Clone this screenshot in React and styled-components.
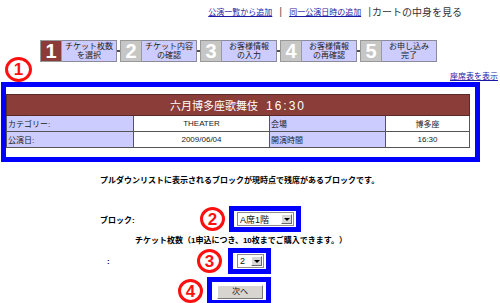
import React from 'react';
import styled, { createGlobalStyle } from 'styled-components';

const GlobalStyle = createGlobalStyle`
    body {
        margin: 0;
        background: #fff;
        font-family: "Liberation Sans", "Noto Sans CJK JP", sans-serif;
        color: #000;
    }
`;

const Page = styled.div`
    width: 500px;
    height: 303px;
    overflow: hidden;
`;

const TopNav = styled.div`
    display: flex;
    justify-content: flex-end;
    align-items: center;
    height: 22px;
    padding-right: 38px;
`;

const NavLink = styled.a`
    font-size: 8px;
    color: #1a1aa6;
    text-decoration: underline;
    cursor: pointer;
`;

const Sep = styled.span`
    font-size: 11px;
    color: #555;
    margin: 0 ${p => p.$right || 7}px 0 7px;
`;

const CartText = styled.span`
    font-size: 10px;
    color: #333;
`;

const Steps = styled.div`
    display: flex;
    margin-top: 18px;
    padding-left: 40px;
`;

const Step = styled.div`
    display: flex;
    align-items: center;
`;

const StepNum = styled.div`
    width: 22px;
    height: 22px;
    box-sizing: border-box;
    border: 1px solid #999;
    background: ${p => (p.$active ? '#8c3c38' : '#c6c6c6')};
    color: #fff;
    font-family: "Liberation Sans", sans-serif;
    font-weight: 700;
    font-size: 20px;
    line-height: 20px;
    text-align: center;
`;

const StepLabel = styled.div`
    width: 55px;
    height: 22px;
    box-sizing: border-box;
    border: 1px solid #8a8a9a;
    border-left: none;
    background: #ccccff;
    color: #222;
    font-size: 8px;
    line-height: 9px;
    text-align: center;
    padding-top: 1px;
`;

const Connector = styled.div`
    width: 3px;
    height: 2px;
    background: #555;
`;

const AnnotRow = styled.div`
    position: relative;
    height: 20px;
    display: flex;
    justify-content: flex-end;
    align-items: flex-end;
    padding-right: 2px;
`;

const Marker = styled.span`
    display: inline-flex;
    align-items: center;
    justify-content: center;
    width: 25px;
    height: 24px;
    box-sizing: border-box;
    border: 3px solid #ff1010;
    border-radius: 50%;
    color: #ff1010;
    font-family: "Liberation Sans", sans-serif;
    font-weight: 700;
    font-size: 17px;
    line-height: 1;
    flex-shrink: 0;
`;

const FloatingMarker = styled(Marker)`
    position: absolute;
    left: 5px;
    top: -5px;
    width: 27px;
    height: 25px;
`;

const SeatLink = styled.a`
    font-size: 8px;
    line-height: 10px;
    color: #1a1aa6;
    text-decoration: underline;
`;

const Frame = styled.div`
    margin-left: 1px;
    width: 479px;
    box-sizing: border-box;
    border: 5px solid #0000ff;
    padding: 7px 6px 9px 0;
`;

const InfoTable = styled.table`
    width: 463px;
    border-collapse: collapse;
    table-layout: fixed;
    font-size: 8px;
`;

const HeadCell = styled.th`
    height: 20px;
    padding: 0;
    background: #8b3d39;
    color: #fff;
    font-weight: 400;
    font-size: 11px;
    text-align: center;
    border: 1px solid #5a2a28;
`;

const Time = styled.span`
    font-family: "Liberation Sans", sans-serif;
    font-size: 12px;
    letter-spacing: 2px;
    margin-left: 8px;
`;

const LabelCell = styled.td`
    height: 15px;
    padding: 0 0 0 1px;
    background: #ccccff;
    border: 1px solid #555;
    color: #222;
`;

const ValueCell = styled.td`
    height: 15px;
    padding: 0;
    background: #fff;
    border: 1px solid #555;
    text-align: center;
    color: #222;
`;

const Notice = styled.p`
    margin: 14px 0 0;
    padding-left: 100px;
    font-size: 8px;
    line-height: 10px;
    font-weight: 700;
`;

const FormRow = styled.div`
    display: flex;
    align-items: center;
    margin-top: ${p => p.$top}px;
    padding-left: ${p => p.$left}px;
`;

const FieldLabel = styled.span`
    width: ${p => p.$w}px;
    font-size: 8px;
    font-weight: 700;
`;

const BlueBox = styled.div`
    display: flex;
    align-items: flex-start;
    margin-left: ${p => p.$gap || 2}px;
    border: 5px solid #0000ff;
    padding: ${p => p.$pad || '1px 2px 0 3px'};
    height: 15px;
    background: #fff;
`;

const Select = styled.div`
    display: flex;
    align-items: center;
    justify-content: space-between;
    width: ${p => p.$w}px;
    height: 14px;
    box-sizing: border-box;
    border: 1px solid #8c8c8c;
    background: #fff;
    padding-left: 2px;
    font-size: 9px;
    color: #111;
`;

const Arrow = styled.span`
    position: relative;
    width: 11px;
    height: 10px;
    margin-right: 1px;
    box-sizing: border-box;
    background: #d8d8d8;
    border: 1px solid;
    border-color: #fff #6a6a6a #6a6a6a #fff;

    &::after {
        content: '';
        position: absolute;
        left: 2px;
        top: 3px;
        border-left: 3px solid transparent;
        border-right: 3px solid transparent;
        border-top: 3px solid #000;
    }
`;

const Button = styled.button`
    width: 46px;
    height: 14px;
    padding: 0;
    background: #d8d5d0;
    border: 1px solid;
    border-color: #fff #777 #777 #fff;
    font-family: "Liberation Sans", "Noto Sans CJK JP", sans-serif;
    font-size: 8px;
    line-height: 12px;
    color: #111;
`;

const TicketNote = styled.p`
    margin: 4px 0 0;
    padding-left: 135px;
    font-size: 8px;
    line-height: 10px;
    font-weight: 700;
`;

const steps = [
    ['チケット枚数', 'を選択'],
    ['チケット内容', 'の確認'],
    ['お客様情報', 'の入力'],
    ['お客様情報', 'の再確認'],
    ['お申し込み', '完了'],
];

export default function App() {
    return (
        <Page>
            <GlobalStyle />
            <TopNav>
                <NavLink>公演一覧から追加</NavLink>
                <Sep>|</Sep>
                <NavLink>同一公演日時の追加</NavLink>
                <Sep $right={1}>|</Sep>
                <CartText>カートの中身を見る</CartText>
            </TopNav>

            <Steps>
                {steps.map((s, i) => (
                    <Step key={i}>
                        <StepNum $active={i === 0}>{i + 1}</StepNum>
                        <StepLabel>
                            {s[0]}
                            <br />
                            {s[1]}
                        </StepLabel>
                        {i < steps.length - 1 && <Connector />}
                    </Step>
                ))}
            </Steps>

            <AnnotRow>
                <FloatingMarker>1</FloatingMarker>
                <SeatLink>座席表を表示</SeatLink>
            </AnnotRow>

            <Frame>
                <InfoTable>
                    <colgroup>
                        <col style={{ width: 127 }} />
                        <col style={{ width: 136 }} />
                        <col style={{ width: 116 }} />
                        <col style={{ width: 84 }} />
                    </colgroup>
                    <tbody>
                        <tr>
                            <HeadCell colSpan={4}>
                                六月博多座歌舞伎<Time>16:30</Time>
                            </HeadCell>
                        </tr>
                        <tr>
                            <LabelCell>カテゴリー:</LabelCell>
                            <ValueCell>THEATER</ValueCell>
                            <LabelCell>会場</LabelCell>
                            <ValueCell>博多座</ValueCell>
                        </tr>
                        <tr>
                            <LabelCell>公演日:</LabelCell>
                            <ValueCell>2009/06/04</ValueCell>
                            <LabelCell>開演時間</LabelCell>
                            <ValueCell>16:30</ValueCell>
                        </tr>
                    </tbody>
                </InfoTable>
            </Frame>

            <Notice>プルダウンリストに表示されるブロックが現時点で残席があるブロックです。</Notice>

            <FormRow $top={20} $left={100}>
                <FieldLabel $w={100}>ブロック:</FieldLabel>
                <Marker>2</Marker>
                <BlueBox $gap={4}>
                    <Select $w={57}>
                        A席1階
                        <Arrow />
                    </Select>
                </BlueBox>
            </FormRow>

            <TicketNote>チケット枚数（1申込につき、10枚までご購入できます。）</TicketNote>

            <FormRow $top={2} $left={107}>
                <FieldLabel $w={90}>:</FieldLabel>
                <Marker>3</Marker>
                <BlueBox $gap={6} $pad="1px 2px 0 4px">
                    <Select $w={27}>
                        2
                        <Arrow />
                    </Select>
                </BlueBox>
            </FormRow>

            <FormRow $top={3} $left={178}>
                <Marker>4</Marker>
                <BlueBox $gap={4} $pad="3px 3px 0 5px">
                    <Button>次へ</Button>
                </BlueBox>
            </FormRow>
        </Page>
    );
}
